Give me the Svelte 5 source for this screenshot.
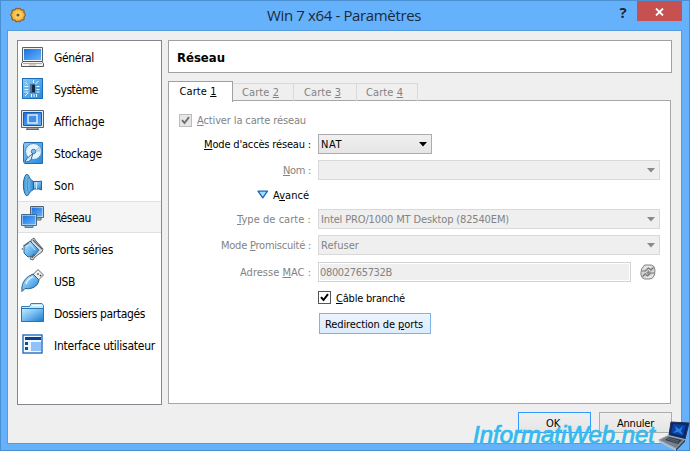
<script>
  const items = [
    ['general', 'Général', 40], ['system', 'Système', 44], ['display', 'Affichage', 51],
    ['storage', 'Stockage', 48], ['sound', 'Son', 20], ['network', 'Réseau', 37],
    ['serial', 'Ports séries', 59], ['usb', 'USB', 21], ['folder', 'Dossiers partagés', 91],
    ['ui', 'Interface utilisateur', 101]
  ];
  const tabs = [['Carte &1', 65], ['Carte &2', 61], ['Carte &3', 63], ['Carte &4', 61]];
  let selected = $state('network');

  // Spreads the letters so that a label takes up the given width.
  function fit(node, width) {
    const natural = node.getBoundingClientRect().width;
    node.style.letterSpacing = (width - natural) / node.textContent.length + 'px';
  }
</script>

{#snippet label(text, width)}
  {@const at = text.indexOf('&')}
  <span class="label" use:fit={width}>{#if at < 0}{text}{:else}{text.slice(0, at)}<u>{text[at + 1]}</u>{text.slice(at + 2)}{/if}</span>
{/snippet}

{#snippet arrow()}
  <svg class="arrow" width="8" height="5" viewBox="0 0 8 5"><path d="M0 0h8L4 4.5z" fill="currentColor" /></svg>
{/snippet}

{#snippet icon(name)}
  <svg class="icon" width="24" height="24" viewBox="0 0 24 24">
    {#if name === 'general'}
      <path d="M1.500 2.500h20v14h-20z" fill="#eee" stroke="#52616e" />
      <path d="M3 4h17v11H3z" fill="url(#screen)" />
      <path d="M2 16.500h19l1.500 2v3H.5v-3z" fill="#f3f3f1" stroke="#555" />
      <path d="M2 18.500h19M8 20h7" stroke="#aaa" />
    {:else if name === 'system'}
      <rect x="1.500" y="1.500" width="20" height="20" fill="url(#pale)" stroke="#1b6db8" />
      <path d="M9 7.500h5v8H9z" fill="#17293c" />
      <path d="M9 7.500h2v8H9z" fill="#55738f" />
      <path d="M3.500 9.500h4M3.500 12.500h4M3.500 15h4M15.500 9.500h3M15.500 12.500h3M15.500 15h3M12.500 3v3M10.500 17v3M13 17v3M15.500 17v3M4.500 5.500l2 2M17.500 4l-3 3M7 16l-3 3" stroke="#e9f7ff" fill="none" />
    {:else if name === 'display'}
      <path d="M.5 1.500h22v17H.5z" fill="#e6eaed" stroke="#59636c" />
      <path d="M2.500 3.500h18v13h-18z" fill="url(#screen)" stroke="#135bb0" />
      <rect x="7" y="6" width="9" height="8" fill="#438de3" stroke="#e5f3ff" stroke-width="1.400" />
      <path d="M7 19h9l2 1.500H5z" fill="#ddd" stroke="#666" />
    {:else if name === 'storage'}
      <path d="M3.500 1.500h18v21h-18l-1-2v-17z" fill="url(#pale)" stroke="#1f6cb3" />
      <circle cx="12.500" cy="10.500" r="8" fill="#e8f5fd" stroke="#4c8fc9" />
      <path d="M12.500 10.500L18 5a8 8 0 0 1 2 6z" fill="#b6daf3" />
      <circle cx="12.500" cy="10.500" r="2.200" fill="#85bce6" stroke="#3b78b1" />
      <path d="M4 20.500c2-4 5-5.500 8-8l-2 6c-1.500 2.500-4 2.500-6 2z" fill="#d5ebfa" stroke="#2767a3" />
    {:else if name === 'sound'}
      <path d="M12 8.500h6l2.500-.5v9l-2.500-1h-6z" fill="url(#blue)" stroke="#31638f" />
      <path d="M5 1.500L7.500 2c.5 3 3 5.500 5 6.500v8c-2 1-4.500 3-5 5.500l-2.500.500c-3.500-5-3.500-16 0-21z" fill="url(#cone)" stroke="#24639a" />
      <path d="M7.500 2.500c-1.500 6-1.500 13 0 19" stroke="#4291cc" fill="none" />
      <path d="M15.500 9v7" stroke="#c8eaff" />
    {:else if name === 'network'}
      <path d="M9.500 1.500h13v11h-13z" fill="#eef5f8" stroke="#52616b" />
      <path d="M10.500 2.500h11v9h-11z" fill="url(#screen)" />
      <path d="M14 13h6v2h-6z" fill="#ccc" stroke="#666" />
      <path d="M.5 9.500h15v11H.5z" fill="#eef5f8" stroke="#426985" />
      <path d="M1.500 10.500h13v9h-13z" fill="url(#screen)" />
      <path d="M4 21h8v1.500H4z" fill="#bde0f6" stroke="#4b7c9c" />
    {:else if name === 'serial'}
      <path d="M10 3l3-2 2 3 7 8-1 3-3 2-4 3-2 3-3-1 2-4z" fill="#d7dce0" stroke="#666" />
      <path d="M3 9l6-5 9 9-5 6-6 1-4-4z" fill="url(#blue)" stroke="#2e6c9a" />
      <path d="M2.500 9L8 5.500M2 12H.8M12 3l9 9M11 21l2-4" stroke="#526573" stroke-width="1.400" fill="none" />
      <path d="M5 10l4-3 5 6" stroke="#c5ecff" fill="none" />
    {:else if name === 'usb'}
      <path d="M12 5.500l5-5 5.500 5.500-5 5z" fill="#f0f0ed" stroke="#666" />
      <path d="M16.500 4.500l1 1M19 6l1 1" stroke="#333" stroke-width="1.500" />
      <path d="M1 22.500c-.8-6 1.500-13 9-16.500l2-1 6 6c-1 7-8 9.500-14 8.500z" fill="url(#blue)" stroke="#225f91" />
      <path d="M5 15c1-3 3-6 7-7" stroke="#daf3ff" stroke-width="1.500" fill="none" />
    {:else if name === 'folder'}
      <path d="M.5 5.500h8l1.500-3h11l1.500 2v16H.5z" fill="#c7e9fc" stroke="#3b7fb1" />
      <path d="M.5 7.500h22v13H.5z" fill="url(#blue)" stroke="#2776b3" />
      <path d="M11 4.500h9.500" stroke="#fff" />
    {:else}
      <rect x="2" y="2" width="19" height="18" fill="#eef7ff" stroke="#236db9" stroke-width="1.400" />
      <path d="M4 4h16v3H4z" fill="#073f91" />
      <path d="M4 9h3v3H4zM4 14h3v3H4z" fill="#124a94" />
      <path d="M10 9h10v9H10z" fill="#92c0fa" />
    {/if}
  </svg>
{/snippet}

<svg class="defs" width="0" height="0">
  <defs>
    <linearGradient id="screen" x1="0" y1="0" x2="1" y2="1"><stop offset="0" stop-color="#1c6fdc" /><stop offset=".5" stop-color="#3f93ef" /><stop offset="1" stop-color="#67b2f8" /></linearGradient>
    <linearGradient id="pale" x1="0" y1="0" x2="1" y2="1"><stop offset="0" stop-color="#8acbf5" /><stop offset="1" stop-color="#2686da" /></linearGradient>
    <linearGradient id="blue" x1="0" y1="0" x2="1" y2="1"><stop offset="0" stop-color="#c8edff" /><stop offset=".5" stop-color="#70b9ef" /><stop offset="1" stop-color="#1777cc" /></linearGradient>
    <linearGradient id="cone"><stop offset="0" stop-color="#3d91d2" /><stop offset=".4" stop-color="#77bcec" /><stop offset="1" stop-color="#3188d4" /></linearGradient>
    <radialGradient id="gold"><stop offset="0" stop-color="#ffe7a0" /><stop offset=".6" stop-color="#fcbf43" /><stop offset="1" stop-color="#ee9924" /></radialGradient>
  </defs>
</svg>

<div class="window">
  <header class="titlebar">
    <svg class="gear" width="16" height="16" viewBox="0 0 16 16">
      <path d="M6 1l2 1 2-1 1 2 3 0v3l1.500 2L14 10v3h-3l-1 2-2-1-2 1-1-2H2v-3L.5 8 2 6V3h3z" fill="url(#gold)" stroke="#80561b" stroke-linejoin="round" />
      <circle cx="8" cy="8" r="1.600" fill="#7c5622" />
    </svg>
    <h1><span class="label" use:fit={154}>Win 7 x64 - Paramètres</span></h1>
    <button class="help">?</button>
    <button class="close" aria-label="Fermer"><svg width="9" height="8" viewBox="0 0 9 8"><path d="M1 .5l7 7M8 .5l-7 7" stroke="#fff" stroke-width="1.800" /></svg></button>
  </header>

  <div class="client">
    <div class="columns">
      <nav>
        {#each items as [id, text, width]}
          <button class="item" class:selected={selected === id} onclick={() => (selected = id)}>
            {@render icon(id)}{@render label(text, width)}
          </button>
        {/each}
      </nav>
      <section>
        <h2><span class="label" use:fit={48}>Réseau</span></h2>
        <div class="tabs">
          {#each tabs as [text, width], i}
            <div class="tab" class:active={i === 0} style:width="{width}px">{@render label(text, 37)}</div>
          {/each}
        </div>
        <div class="pane">
          <div class="row enable muted">
            <span class="check off"><svg width="11" height="11" viewBox="0 0 11 11"><path d="M2 5.200L4.500 8 9 2.200" /></svg></span>{@render label('&Activer la carte réseau', 109)}
          </div>
          <div class="row mode">
            <div class="name">{@render label("&Mode d'accès réseau :", 107)}</div>
            <div class="combo live">{@render label('NAT', 21)}{@render arrow()}</div>
          </div>
          <div class="row nom muted">
            <div class="name">{@render label('&Nom :', 28)}</div>
            <div class="combo">{@render arrow()}</div>
          </div>
          <div class="row advanced">
            <svg width="12" height="10" viewBox="0 0 12 10"><path d="M1 1.200h9.500L5.800 7.800z" fill="#a9dcfb" stroke="#1767b5" stroke-width="1.300" stroke-linejoin="round" /></svg>
            {@render label('A&vancé', 36)}
          </div>
          <div class="row type muted">
            <div class="name">{@render label('&Type de carte :', 74)}</div>
            <div class="combo">{@render label('Intel PRO/1000 MT Desktop (82540EM)', 188)}{@render arrow()}</div>
          </div>
          <div class="row prom muted">
            <div class="name">{@render label('Mode &Promiscuité :', 90)}</div>
            <div class="combo">{@render label('Refuser', 38)}{@render arrow()}</div>
          </div>
          <div class="row mac muted">
            <div class="name">{@render label('Adresse &MAC :', 71)}</div>
            <div class="field">{@render label('08002765732B', 72)}</div>
            <svg class="refresh" width="16" height="16" viewBox="0 0 16 16">
              <path d="M4.500 1h7L14 2.500 15 6l-.5 5-2.500 3.500-3 .5H4.500L2 13.500.8 10 1.500 5z" fill="#d6d6d6" stroke="#858585" />
              <path d="M1.500 7h4l3-3 2 1.500M14.500 9h-4l-3 3-2-1.500M13.500 3.500L10.500 6.500M2.500 12.500l3-3" fill="none" stroke="#777" stroke-width="1.200" />
              <path d="M3 5.500C4.500 2.500 8 2 11 3M13 11c-1.500 2.500-4.500 3-7 2" fill="none" stroke="#f5f5f5" />
              <path d="M5.500 9.500L9 6v1.500h2L7.500 11V9.500z" fill="#8a8a8a" />
            </svg>
          </div>
          <div class="row cable">
            <span class="check"><svg width="11" height="11" viewBox="0 0 11 11"><path d="M2 5.200L4.500 8 9 2.200" /></svg></span>{@render label('&Câble branché', 69)}
          </div>
          <button class="redirect">{@render label('Redirection de &ports', 98)}</button>
        </div>
      </section>
    </div>
    <footer>
      <button class="ok">{@render label('OK', 14)}</button>
      <button>{@render label('Annuler', 37)}</button>
    </footer>
  </div>

  <div class="mark">
    <span class="brand"><span class="label" use:fit={182}>InformatiWeb.net</span></span>
    <svg width="32" height="31" viewBox="0 0 32 31">
      <path d="M13 1l18 1-4 16-16-4z" fill="#0a2670" stroke="#25304d" />
      <path d="M15 3l13 1-3 11-12-3z" fill="#0c3f9f" />
      <path d="M17 5l4 3 4-3-2 5 2 4-5-3-5 1 3-3z" fill="#2480dc" />
      <path d="M10 14.500l17 4-9 9L.8 19z" fill="#75808e" stroke="#a3abb3" />
      <path d="M11 16l13 3-4 4-13-4z" fill="#343b48" />
      <path d="M10 17l11 3M9 18l11 3.500" stroke="#77818d" stroke-width=".6" />
      <path d="M1 19.500L18 28v2L1 21z" fill="#b9c1c8" />
      <path d="M18 28l9-9.500v2L18 30z" fill="#3b3942" />
    </svg>
  </div>
</div>

<style>
  :global(body) { margin: 0; overflow: hidden; }
  * { box-sizing: border-box; }
  .defs { position: absolute; }
  .window { position: relative; width: 690px; height: 451px; padding: 0 7px 7px 6px; border: 1px solid #4a90d1; background: #65b1fb; font: 11px/16px "DejaVu Sans Condensed", "DejaVu Sans", sans-serif; color: #000; }
  .label { display: inline-block; white-space: pre; }
  u { text-underline-offset: 1px; text-decoration-thickness: 1px; }
  button { display: flex; align-items: center; justify-content: center; margin: 0; padding: 0; border: 0; background: none; color: inherit; font: inherit; }
  svg { flex: none; }
  .titlebar { display: flex; height: 29px; padding-left: 3px; }
  .gear { margin-top: 6px; }
  h1 { flex: 1; margin: 2px 0 0 24px; padding-left: 29px; text-align: center; font: 15px/25px "Open Sans", sans-serif; color: #1b2a3a; }
  .help { width: 28px; height: 21px; font: bold 15px/20px "Open Sans", sans-serif; color: #1b2733; }
  .close { width: 45px; height: 20px; background: #c75050; }
  .close svg { margin-top: 1px; }
  .client { height: 414px; border: 1px solid #559bdc; background: #efefef; padding: 9px 9px 0; }
  .columns { display: flex; gap: 6px; height: 365px; }
  nav { width: 145px; border: 1px solid #828790; background: #fff; }
  .item { width: 143px; height: 32px; padding-left: 3px; gap: 9px; justify-content: flex-start; font-size: 12px; }
  .item .label, .row .label { padding-top: 2px; }
  .item.selected { background: #f5f5f5; border: solid #e0e0e0; border-width: 1px 0; }
  section { width: 504px; }
  h2 { height: 33px; margin: 0; padding-left: 8px; border: 1px solid #a0a0a0; background: #fff; font: bold 13px/33px "DejaVu Sans Condensed", sans-serif; }
  .tabs { position: relative; z-index: 1; display: flex; align-items: flex-end; height: 28px; padding-top: 7px; }
  .tab { display: flex; align-items: center; justify-content: center; height: 18px; padding-right: 5px; border: 1px solid #d9d9d9; border-left: 0; border-bottom: 0; color: #838383; }
  .tab.active { height: 21px; margin-bottom: -1px; border: 1px solid #a0a0a0; border-bottom: 0; background: #fff; color: #000; }
  .pane { width: 503px; height: 304px; margin-top: -1px; border: 1px solid #a7a7a7; background: #fff; }
  .row { display: flex; align-items: center; height: 20px; }
  .muted { color: #838383; }
  .enable { margin: 9px 0 0 10px; gap: 5px; }
  .mode { margin-top: 4px; }
  .nom, .prom { margin-top: 6px; }
  .advanced { height: 16px; margin: 7px 0 0 88px; gap: 4px; }
  .type { margin-top: 6px; }
  .mac { margin-top: 7px; }
  .cable { height: 13px; margin: 9px 0 0 149px; gap: 5px; }
  .name { width: 149px; padding-right: 7px; text-align: right; }
  .combo { display: flex; align-items: center; width: 342px; height: 20px; padding: 0 4px 0 2px; border: 1px solid #d9d9d9; background: #efefef; }
  .combo .arrow { margin-left: auto; color: #8a8a8a; }
  .live { width: 114px; border-color: #acacac; background: linear-gradient(#f0f0f0, #e5e5e5); }
  .live .arrow { color: #000; }
  .field { display: flex; align-items: center; width: 313px; height: 20px; padding-left: 1px; border: 1px solid #d3d3d3; box-shadow: inset 0 0 0 1px #fff; background: #efefef; }
  .refresh { margin-left: 9px; }
  .check { width: 13px; height: 13px; border: 1px solid #555; background: #fff; }
  .check svg { display: block; }
  .check path { fill: none; stroke: #000; stroke-width: 2; }
  .check.off { border-color: #bcbcbc; background: #e6e6e6; }
  .check.off path { stroke: #707070; }
  .redirect { width: 112px; height: 21px; margin: 9px 0 0 150px; padding: 2px 2px 0 0; border: 1px solid #7eb4ea; background: linear-gradient(#ecf4fc, #dcecfc); }
  footer { display: flex; justify-content: flex-end; gap: 8px; padding-top: 7px; }
  footer button { width: 73px; height: 21px; padding-top: 2px; border: 1px solid #acacac; background: linear-gradient(#f0f0f0, #e5e5e5); }
  footer .ok { padding-right: 3px; border-color: #3399ff; }
  .mark { position: absolute; left: 472px; top: 420px; display: flex; width: 217px; height: 30px; justify-content: space-between; }
  .brand { font: italic 24px/27px "Liberation Sans", sans-serif; color: #35b9ee; -webkit-text-stroke: .7px #35b9ee; text-shadow: 0 0 1px #a5e8ff; }
</style>
